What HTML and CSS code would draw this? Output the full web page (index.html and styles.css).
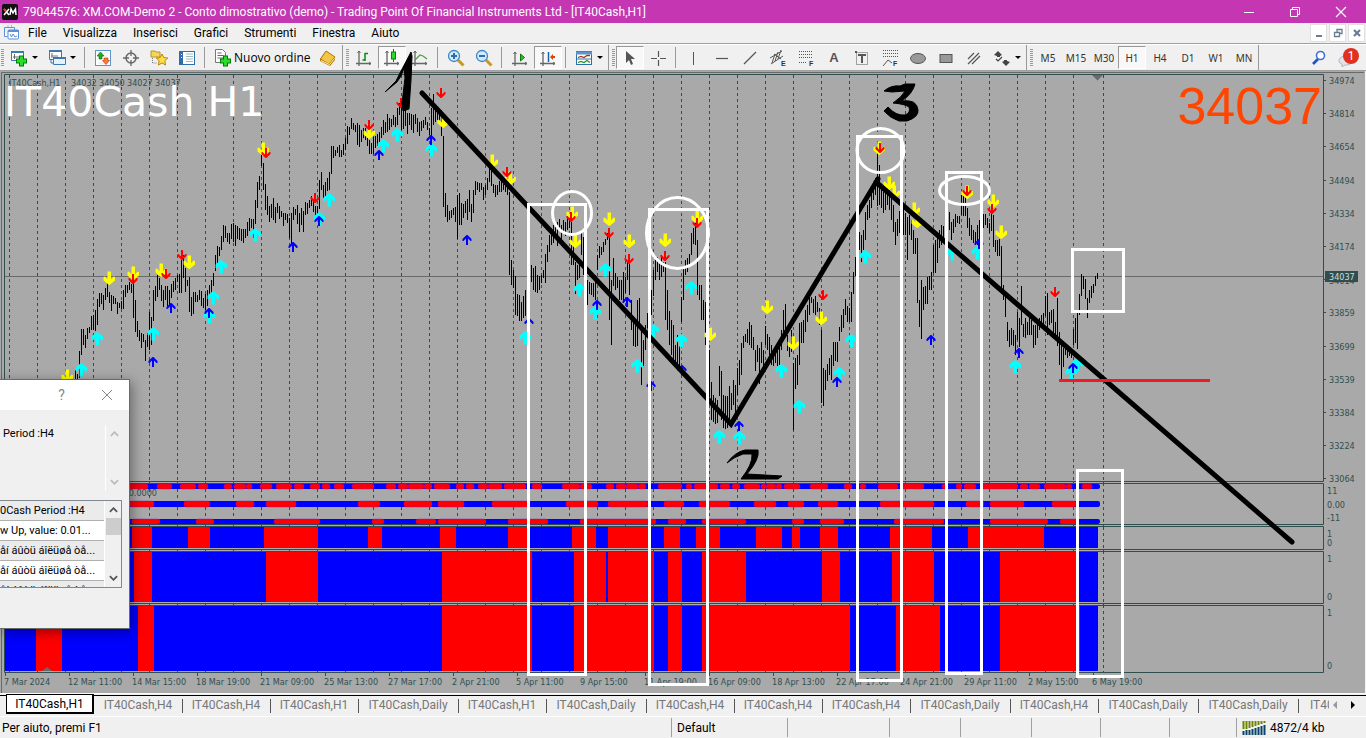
FILE: index.html
```html
<!DOCTYPE html>
<html lang="it">
<head>
<meta charset="utf-8">
<title>XM.COM-Demo 2 - IT40Cash,H1</title>
<link rel="stylesheet" href="styles.css">
</head>
<body>
<header class="titlebar">
  <svg class="logo" viewBox="0 0 16 16" aria-hidden="true"><rect width="16" height="16" rx="2" fill="#111"/><path d="M2 5l5 6M7 5l-5 6" stroke="#fff" stroke-width="1.6"/><path d="M2 5l2 2.500" stroke="#e22" stroke-width="1.600"/><path d="M8 11l1-6 2 4 2.500-4 .500 6" stroke="#fff" stroke-width="1.500" fill="none"/></svg>
  <h1 class="title">79044576: XM.COM-Demo 2 - Conto dimostrativo (demo) - Trading Point Of Financial Instruments Ltd - [IT40Cash,H1]</h1>
  <div class="winctl">
    <button aria-label="Riduci"><svg viewBox="0 0 12 12"><path d="M1 6.500h10" stroke="#fff"/></svg></button>
    <button aria-label="Ripristina"><svg viewBox="0 0 12 12"><path d="M1.500 3.500h7v7h-7zM3.500 3v-1.500h7v7H9" stroke="#fff" fill="none"/></svg></button>
    <button aria-label="Chiudi"><svg viewBox="0 0 12 12"><path d="M1 1l10 10M11 1L1 11" stroke="#fff" stroke-width="1.200"/></svg></button>
  </div>
</header>
<nav class="menubar">
  <svg class="menuicon" viewBox="0 0 16 16" aria-hidden="true"><path d="M.5 5V2.500h10V5M3.500 1h1M7 1h1" stroke="#5b8fd6" fill="none"/><path d="M.5 5v6.500h3" stroke="#5b8fd6" fill="#fff"/><rect x="4" y="5" width="10.500" height="9" rx="1" fill="#fff" stroke="#5b8fd6"/><path d="M4 6h11" stroke="#5b8fd6" stroke-width="2"/><path d="M6 9l1.500 3L9 9l2 3 2-1" stroke="#5b8fd6" fill="none"/></svg>
  <button>File</button><button>Visualizza</button><button>Inserisci</button><button>Grafici</button><button>Strumenti</button><button>Finestra</button><button>Aiuto</button>
  <div class="mdictl">
    <button aria-label="Riduci grafico"><svg viewBox="0 0 12 12"><path d="M3 9h6" stroke="#6b7c90" stroke-width="2"/></svg></button>
    <button aria-label="Ripristina grafico"><svg viewBox="0 0 12 12"><path d="M2.500 5.500h5v4h-5zM5 5V2.500h5v4H8M2 5.500h6M4.500 2.500h6" stroke="#6b7c90" stroke-width="1.300" fill="none"/></svg></button>
    <button aria-label="Chiudi grafico"><svg viewBox="0 0 12 12"><path d="M3 3l6 6M9 3L3 9" stroke="#6b7c90" stroke-width="2.200"/></svg></button>
  </div>
</nav>
<div class="toolbar">
  <div class="group first">
    <button class="drop" aria-label="Nuovo grafico"><svg viewBox="0 0 18 18"><path d="M1.500 2.500h12v9h-12z" fill="#fff" stroke="#3c78b4"/><path d="M1 3h13" stroke="#3c78b4" stroke-width="2"/><path d="M4.500 5v5M3 8h7" stroke="#666"/><path d="M11.500 6.500v11M6 12h11" stroke="#067a06" stroke-width="5"/><path d="M11.500 7.500v9M7 12h9" stroke="#2bdc2b" stroke-width="3"/></svg><i></i></button>
    <button class="drop" aria-label="Profili"><svg viewBox="0 0 18 18"><path d="M1.500 1.500h12v9h-12z" fill="#fff" stroke="#3c78b4"/><path d="M1 2h13" stroke="#3c78b4" stroke-width="2"/><path d="M4 4v5M3 7h7" stroke="#777"/><path d="M5.500 8.500h12v7h-12z" fill="#e4f0fb" stroke="#3c78b4"/><path d="M5 9h13" stroke="#3c78b4" stroke-width="2"/><path d="M3 11v3h2" stroke="#3c78b4" fill="none"/></svg><i></i></button>
    <span class="sep"></span>
    <button aria-label="Market Watch"><svg viewBox="0 0 18 18"><rect x="1.500" y="1.500" width="15" height="15" fill="#fff" stroke="#5a96cc"/><path d="M4 4h10M4 14h10M4 7h10" stroke="#dde8f4"/><path d="M6.500 3l3.500 4H8v3H5V7H3z" fill="#22aa22" stroke="#0a6a0a" stroke-width=".6"/><path d="M12 15.500l-3.500-4H10V9h4v2.500h1.500z" fill="#ff7a30" stroke="#c03000" stroke-width=".6"/></svg></button>
    <button aria-label="Finestra dati"><svg viewBox="0 0 18 18"><circle cx="9" cy="9" r="5" stroke="#666" stroke-width="1.500" fill="none"/><path d="M9 1v6M9 11v6M1 9h6M11 9h6" stroke="#666" stroke-width="1.300"/></svg></button>
    <button aria-label="Navigatore"><svg viewBox="0 0 18 18"><path d="M1 2h4l1 1h4v5H1z" fill="#f6d65a" stroke="#b8922a"/><path d="M2.500 9v5h4" stroke="#777" stroke-dasharray="1 1" fill="none"/><path d="M12 5l1.800 3.600 4 .4-3 2.800.8 4.200-3.600-2-3.600 2 .8-4.200-3-2.800 4-.4z" fill="#ffdf45" stroke="#b8860b"/></svg></button>
    <button aria-label="Terminale"><svg viewBox="0 0 18 18"><rect x="1.500" y="2.500" width="15" height="13" fill="#fff" stroke="#2f6ea8"/><path d="M2 3h3v12H2z" fill="#2f6ea8"/><path d="M8 5h7M8 7.500h7M8 10h7M8 12.500h7" stroke="#9bb"/><path d="M3.500 5v1m0 2v1" stroke="#fff"/></svg></button>
    <span class="sep"></span>
    <button class="order"><svg viewBox="0 0 18 18"><path d="M1.500.5h7l3 3v10h-10z" fill="#fff" stroke="#777"/><path d="M3.500 4h4M3.500 6.500h6M3.500 9h6" stroke="#666"/><path d="M11.500 6.500v11M6 12h11" stroke="#067a06" stroke-width="5"/><path d="M11.500 7.500v9M7 12h9" stroke="#2bdc2b" stroke-width="3"/></svg>Nuovo ordine</button>
    <button aria-label="MetaEditor"><svg viewBox="0 0 18 18"><path d="M1 10l6-8 9 6v3l-5 6-10-5z" fill="#b87a08"/><path d="M1.500 10L7 2l9 6-6 7z" fill="#f4c648" stroke="#b07a10"/><path d="M2 11.500l8.500 4 5-6" stroke="#fff2b0" fill="none"/></svg></button>
  </div>
  <div class="group">
    <button aria-label="Grafico a barre"><svg viewBox="0 0 18 18"><path d="M4 2v15M1 14.500h15" stroke="#666" stroke-width="1.300"/><path d="M2.500 4L4 2l1.500 2M14 13l2 1.500-2 1.500" stroke="#666" fill="none"/><path d="M10 4v8M10 4.500h3M7.500 11h3" stroke="#0a8a0a" stroke-width="1.500"/></svg></button>
    <button class="on" aria-label="Candele"><svg viewBox="0 0 18 18"><path d="M4 2v15M1 14.500h15" stroke="#666" stroke-width="1.300"/><path d="M2.500 4L4 2l1.500 2M14 13l2 1.500-2 1.500" stroke="#666" fill="none"/><path d="M10.500 0v13" stroke="#0a7a0a"/><rect x="8.500" y="3" width="4" height="7" fill="#2bdc2b" stroke="#0a7a0a"/></svg></button>
    <button aria-label="Grafico a linee"><svg viewBox="0 0 18 18"><path d="M4 2v15M1 14.500h15" stroke="#666" stroke-width="1.300"/><path d="M2.500 4L4 2l1.500 2M14 13l2 1.500-2 1.500" stroke="#666" fill="none"/><path d="M4 11l5-5 3 1 4 3" stroke="#4aa04a" stroke-width="1.300" fill="none"/></svg></button>
    <span class="sep"></span>
    <button aria-label="Ingrandisci"><svg viewBox="0 0 18 18"><path d="M11 11l5.500 5.500" stroke="#c89820" stroke-width="3"/><circle cx="7" cy="7" r="5.500" fill="#cfeaff" stroke="#3f84c4" stroke-width="1.300"/><path d="M7 4v6M4 7h6" stroke="#2a6cae" stroke-width="2"/></svg></button>
    <button aria-label="Riduci zoom"><svg viewBox="0 0 18 18"><path d="M11 11l5.500 5.500" stroke="#c89820" stroke-width="3"/><circle cx="7" cy="7" r="5.500" fill="#cfeaff" stroke="#3f84c4" stroke-width="1.300"/><path d="M4 7h6" stroke="#2a6cae" stroke-width="2"/></svg></button>
    <span class="sep"></span>
    <button aria-label="Scorrimento automatico"><svg viewBox="0 0 18 18"><path d="M4 3v14M1 14.500h15" stroke="#666" stroke-width="1.300"/><path d="M2.500 5L4 3l1.500 2M14 13l2 1.500-2 1.500" stroke="#666" fill="none"/><path d="M9.500 5l4 3.500-4 3.500z" fill="#2bc02b" stroke="#0a7a0a"/></svg></button>
    <button class="on" aria-label="Spostamento grafico"><svg viewBox="0 0 18 18"><path d="M4 3v14M1 14.500h15" stroke="#666" stroke-width="1.300"/><path d="M2.500 5L4 3l1.500 2M14 13l2 1.500-2 1.500" stroke="#666" fill="none"/><path d="M9.500 3v10" stroke="#1464b4" stroke-width="1.500"/><path d="M11 8l3-3v2h2v2h-2v2z" fill="#e04000"/></svg></button>
    <span class="sep"></span>
    <button class="drop" aria-label="Modelli"><svg viewBox="0 0 18 18"><rect x="1.500" y="2.500" width="15" height="13" fill="#fff" stroke="#2f6ea8"/><path d="M1 4h16" stroke="#5a96cc" stroke-width="3"/><path d="M3 8.500l3-1 3 1 3-2h3" stroke="#b03010" fill="none" stroke-width="1.300"/><path d="M2 10h14" stroke="#2f6ea8"/><path d="M3 13.500l3-1 3 1 3-2 3 2" stroke="#1a9a1a" fill="none" stroke-width="1.300"/></svg><i></i></button>
  </div>
  <div class="group">
    <button class="on" aria-label="Cursore"><svg viewBox="0 0 18 18"><path d="M5 2v12l3-3 2 5 2-1-2-5h4z" fill="#555"/></svg></button>
    <button aria-label="Mirino"><svg viewBox="0 0 18 18"><path d="M9.500 2v6M9.500 11v6M2 9.500h6M11 9.500h6" stroke="#555" stroke-width="1.200"/></svg></button>
    <span class="sep"></span>
    <button aria-label="Linea verticale"><svg viewBox="0 0 18 18"><path d="M8.500 3v13" stroke="#555"/></svg></button>
    <button aria-label="Linea orizzontale"><svg viewBox="0 0 18 18"><path d="M3 9.500h12" stroke="#555" stroke-width="1.200"/></svg></button>
    <button aria-label="Trendline"><svg viewBox="0 0 18 18"><path d="M3 15L15 3" stroke="#555" stroke-width="1.200"/></svg></button>
    <button aria-label="Canale"><svg viewBox="0 0 18 18"><path d="M1 9l12-7M2 15l12-8M3 14L6 5M6 12l3-9M9 10l3-9M5 5l7 5" stroke="#555"/><text x="12" y="17" class="tiny">E</text></svg></button>
    <button aria-label="Fibonacci"><svg viewBox="0 0 18 18"><path d="M2 2.500h14M2 5.500h14M2 8.500h14M2 13.500h8" stroke="#555" stroke-dasharray="1 1"/><text x="12" y="17" class="tiny">F</text></svg></button>
    <button class="ta">A</button>
    <button aria-label="Etichetta"><svg viewBox="0 0 18 18"><rect x="3.500" y="3.500" width="11" height="12" fill="none" stroke="#555" stroke-dasharray="1 1"/><path d="M5 6h8M9 6v8M2 3h2" stroke="#555" stroke-width="2"/></svg></button>
    <button aria-label="Ventaglio"><svg viewBox="0 0 18 18"><path d="M2 1.500h15M2 4.500h15M2 7.500h15" stroke="#555" stroke-dasharray="1 1"/><path d="M2 17l5-6 4 3" stroke="#555" fill="none"/><text x="12" y="17" class="tiny">F</text></svg></button>
    <button aria-label="Ellisse"><svg viewBox="0 0 18 18"><ellipse cx="9" cy="9.500" rx="7.500" ry="5" fill="#999" stroke="#555"/></svg></button>
    <button aria-label="Rettangolo"><svg viewBox="0 0 18 18"><rect x="3" y="5.500" width="12" height="8" fill="#999" stroke="#555"/></svg></button>
    <button aria-label="Linee cicliche"><svg viewBox="0 0 18 18"><path d="M3 10l6-6M3 15L14 4M7 15l8-8" stroke="#555" stroke-width="1.200"/></svg></button>
    <button class="drop" aria-label="Frecce"><svg viewBox="0 0 18 18"><path d="M5 2l4 4-2 1v1H4V7L1 6zM13 17l-4-4 2-1v-1h3v1l3 1z" fill="#444"/><path d="M3 10l2 2 4-4" stroke="#444" stroke-width="1.200" fill="none"/></svg><i></i></button>
  </div>
  <div class="group tf">
    <button>M5</button><button>M15</button><button>M30</button><button class="on">H1</button><button>H4</button><button>D1</button><button>W1</button><button>MN</button>
  </div>
  <div class="right">
    <button aria-label="Cerca"><svg viewBox="0 0 18 18"><path d="M3 15l5-5" stroke="#1e50c8" stroke-width="2.600"/><circle cx="10.500" cy="6.500" r="4" fill="#fff" stroke="#3f70d8" stroke-width="1.600"/></svg></button>
    <button class="bell" aria-label="Notifiche"><svg viewBox="0 0 18 18"><path d="M1 12c0-3 3-5 7-5s6 2 6 5-3 4-7 4l-3 2v-3c-2-.6-3-1.500-3-3z" fill="#e3e3ea" stroke="#b4b4bc"/></svg><b>1</b></button>
  </div>
</div>

<main class="workspace">
  <svg class="chart" id="chart" viewBox="0 71 1366 622" preserveAspectRatio="xMinYMin meet">
    <path class="edge" d="M1.500 693V72.500H1364"/>
    <path d="M1365.500 71v622" stroke="#f4f4f4"/>
    <g id="grid"></g>
    <path class="frame" d="M4.500 672.500V74.500H1323.500V481.500H4.500M4.500 483.500H1323.500V524.500H4.500M4.500 526.500H1323.500V549.500H4.500M4.500 551.500H1323.500V603.500H4.500M4.500 605.500H1323.500V672.500H4.500"/>
    <path d="M5 276.500H1323" stroke="#696969"/>
    <path d="M1092 75h11l-5.500 5.500z" fill="#696969"/>
    <g id="panels"></g>
    <path d="M42 671h10l-5-4z" fill="#696969"/>
    <g id="axis"></g>
    <text class="small" y="86"><tspan x="9">IT40Cash,H1</tspan><tspan x="71">34032</tspan><tspan x="99">34050</tspan><tspan x="127">34027</tspan><tspan x="155">34037</tspan></text>
    <text class="small" x="157" y="496" text-anchor="end">0.0000</text>
    <rect x="1325" y="271" width="33" height="11" fill="#2f4f4f"/>
    <text class="small tag" x="1329" y="280">34037</text>
    <path id="bars" stroke="#000" fill="none"/>
    <g id="arrows"></g>
    <text class="symbol" x="4" y="116">IT40Cash H1</text>
    <text class="quote" x="1322" y="124" text-anchor="end">34037</text>
    <path d="M422 93L731 424L878 179M876 182L1292 542" stroke="#000" stroke-width="5" stroke-linecap="round" fill="none"/>
    <path d="M1059 380.500h151" stroke="#ed1c24" stroke-width="3"/>
    <g fill="none" stroke="#fff" stroke-width="3">
      <rect x="528.500" y="204.500" width="57" height="470"/><rect x="649.500" y="209.500" width="58" height="475"/>
      <rect x="857.500" y="136.500" width="44" height="544"/><rect x="946.500" y="172.500" width="35" height="501"/>
      <rect x="1072.500" y="249.500" width="51" height="62"/><rect x="1077.500" y="470.500" width="45" height="206"/>
      <ellipse cx="572" cy="213" rx="19.500" ry="21.500"/><ellipse cx="677.500" cy="233" rx="31" ry="35.500"/>
      <ellipse cx="880.500" cy="150.500" rx="23.500" ry="22"/><ellipse cx="964.500" cy="190.500" rx="25" ry="14"/>
    </g>
    <path d="M385 92L396 81L400 73L411 52L412 56L411 80L409 109L403 111L402 103L405 78L404 68L401 76L397 82Z" stroke="#000"/>
    <g stroke="#000" stroke-linejoin="round">
      <path d="M727 463Q735 452 745 450H758Q760 459 747 474L782 476L778 479H741Q753 464 752 454H743Q734 457 727 463Z"/>
      <path d="M884 91Q891 85 900 86L905 84H915Q913 93 902 101Q917 99 918 110Q919 117 907 121H899Q890 118 884 111L888 107Q896 116 905 115Q911 113 909 107Q905 104 893 103Q902 97 905 91L892 92Z"/>
    </g>
  </svg>
  <section class="dialog" aria-label="Avviso">
    <div class="dlghead"><button aria-label="Guida">?</button><button aria-label="Chiudi avviso"><svg viewBox="0 0 12 12"><path d="M1 1l10 10M11 1L1 11" stroke="#888"/></svg></button></div>
    <div class="message"><p>Period :H4</p><div class="scroll"><svg viewBox="0 0 10 6"><path d="M1 5l4-4 4 4"/></svg><svg viewBox="0 0 10 6"><path d="M1 1l4 4 4-4"/></svg></div></div>
    <div class="list">
      <ul><li>0Cash Period :H4</li><li>w Up, value: 0.01...</li><li>åí áûòü áîëüøå òå...</li><li>åí áûòü áîëüøå òå...</li><li>åí áûòü áîëüøå òå...</li></ul>
      <div class="scroll dark"><svg viewBox="0 0 10 6"><path d="M1 5l4-4 4 4"/></svg><span></span><svg viewBox="0 0 10 6"><path d="M1 1l4 4 4-4"/></svg></div>
    </div>
  </section>
</main>

<nav class="tabs">
  <button class="cur">IT40Cash,H1</button><button>IT40Cash,H4</button><button>IT40Cash,H4</button><button>IT40Cash,H1</button><button class="long">IT40Cash,Daily</button><button>IT40Cash,H1</button><button class="long">IT40Cash,Daily</button><button>IT40Cash,H4</button><button>IT40Cash,H4</button><button>IT40Cash,H4</button><button class="long">IT40Cash,Daily</button><button>IT40Cash,H4</button><button class="long">IT40Cash,Daily</button><button class="long">IT40Cash,Daily</button><button class="last">IT40Cash,H4</button>
  <div class="tabnav"><button class="off" aria-label="Schede precedenti"></button><button aria-label="Schede successive"></button></div>
</nav>
<footer class="status">
  <span class="help">Per aiuto, premi F1</span><span class="w116">Default</span><span class="w102"></span><span class="w71"></span><span class="w71"></span><span class="w69"></span><span class="w69"></span><span class="w67"></span>
  <span class="net"><svg viewBox="0 0 24 14"><path d="M1.500 0v8M4.500 0v8M7.500 0v7M10.500 0v6M13.500 0v5M16.500 0v4M19.500 0v3M22.500 0v2" stroke="#6f8700" stroke-width="2"/><path d="M1.500 14v-4M4.500 14v-5M7.500 14v-5M10.500 14v-6M13.500 14v-7M16.500 14v-8M19.500 14v-9M22.500 14v-10" stroke="#0a4468" stroke-width="2"/></svg>4872/4 kb</span>
</footer>
<script src="chart.js"></script>
</body>
</html>
```
FILE: styles.css
```css
* { box-sizing: border-box; }
body { margin: 0; height: 100vh; display: flex; flex-direction: column; overflow: hidden; background: #f0f0f0; color: #000; font: 12px Roboto, "Open Sans", sans-serif; }
button { border: 0; margin: 0; padding: 0; background: none; font: inherit; color: inherit; white-space: nowrap; }
button svg { display: block; }

.titlebar { height: 23px; flex: none; display: flex; align-items: center; background: #c436b2; color: #fff; padding-left: 2px; }
.logo { width: 16px; height: 16px; }
.title { margin: 0 0 0 5px; flex: 1; font-size: 12px; font-weight: 400; white-space: nowrap; overflow: hidden; }
.winctl { display: flex; height: 20px; margin-right: 2px; }
.winctl button { width: 46px; display: flex; align-items: center; justify-content: center; }
.winctl svg { width: 12px; height: 12px; }

.menubar { height: 21px; flex: none; display: flex; align-items: stretch; border-bottom: 1px solid #a0a0a0; padding-left: 4px; }
.menuicon { width: 16px; height: 16px; margin: 2px 0 0; }
.menubar > button { padding: 0 8px; line-height: 19px; }
.mdictl { margin-left: auto; display: flex; gap: 2px; padding: 1px 1px 1px 0; }
.mdictl button { width: 17px; background: #fff; border: 1px solid #e0e0e0; display: flex; align-items: center; justify-content: center; }
.mdictl svg { width: 12px; height: 12px; }

.toolbar { height: 27px; flex: none; display: flex; border-top: 1px solid #fff; border-bottom: 1px solid #a0a0a0; color: #333; }
.group { display: flex; align-items: center; border-right: 1px solid #999; position: relative; padding-left: 7px; height: 25px; }
.group.first { padding-left: 5px; }
.group::before { content: ""; position: absolute; left: 3px; top: 4px; width: 3px; height: 18px; background: repeating-linear-gradient(#999 0 1px, transparent 1px 2px); }
.group.first::before { left: 1px; }
.group button { width: 28px; height: 23px; display: flex; align-items: center; justify-content: center; flex: none; border: 1px solid transparent; }
.group button svg { width: 18px; height: 18px; flex: none; }
.group .drop { width: 38px; justify-content: flex-start; padding-left: 4px; gap: 4px; }
.drop i { border: 3px solid transparent; border-top-color: #000; border-bottom: 0; }
.group .on { background: #f8f8f8; border-color: #999 #fff #fff #999; }
.sep { width: 8px; height: 21px; flex: none; background: linear-gradient(#999, #999) 3px 0 / 1px 100% no-repeat; }
.group .order { width: 105px; font: 12px "Open Sans", "Noto Sans", sans-serif; color: #000; gap: 2px; justify-content: flex-start; padding-left: 4px; }
.group.tf { font: 10px "Noto Sans", sans-serif; color: #333; }
.group .ta { font: bold 13px "Liberation Sans", sans-serif; color: #555; }
.tiny { font: bold 7px "Liberation Sans", sans-serif; fill: #333; }
.right { margin-left: auto; display: flex; align-items: center; gap: 10px; padding-right: 10px; }
.right svg { width: 18px; height: 18px; }
.bell { position: relative; }
.bell b { position: absolute; left: 5px; top: -1px; width: 16px; height: 16px; border-radius: 8px; background: #e03020; color: #fff; font: 12px/16px Roboto, sans-serif; text-align: center; }

.workspace { flex: 1; min-height: 0; position: relative; background: #a9a9a9; }
.chart { display: block; width: 100%; height: 100%; overflow: visible; }
.edge { stroke: #696969; fill: none; }
.frame { stroke: #2f4f4f; fill: none; }
.grid { stroke: #2f4f4f; stroke-dasharray: 3 3; }
.small { font: 9px "DejaVu Sans Condensed", "DejaVu Sans", sans-serif; fill: #2f4f4f; }
.tag { fill: #d8d8d8; }
.symbol { font: 41px "DejaVu Sans", sans-serif; fill: #fff; }
.quote { font: 52px "Liberation Sans", Arial, sans-serif; fill: #ff4500; }

.dialog { position: absolute; left: 0; top: 308px; width: 130px; height: 250px; background: #f0f0f0; border: 1px solid #6a6a6a; border-left: 0; box-shadow: 2px 3px 12px rgba(0, 0, 0, .4); font: 11px Roboto, sans-serif; overflow: hidden; }
.dlghead { height: 30px; background: #fff; display: flex; justify-content: flex-end; color: #888; font-size: 14px; }
.dlghead button { width: 45px; display: flex; align-items: center; justify-content: center; }
.dlghead svg { width: 12px; height: 12px; }
.message { height: 66px; margin: 15px 7px 9px 0; display: flex; justify-content: space-between; }
.message p { margin: 0 0 0 3px; line-height: 17px; }
.scroll { width: 17px; border-left: 1px solid #fff; display: flex; flex-direction: column; align-items: center; justify-content: space-between; padding: 6px 0; }
.scroll svg { width: 9px; height: 6px; fill: none; stroke: #bbb; stroke-width: 2; }
.list { height: 88px; width: 122px; border: 1px solid #828790; border-left: 0; display: flex; overflow: hidden; }
.list ul { list-style: none; margin: 0; padding: 0; flex: 1; min-width: 0; overflow: hidden; }
.list li { height: 20px; line-height: 20px; white-space: nowrap; border-bottom: 1px solid #b0b0b0; background: #fff; overflow: hidden; }
.list li:nth-child(odd) { background: #ebebeb; }
.scroll.dark { justify-content: flex-start; }
.scroll.dark svg { stroke: #555; flex: none; }
.scroll.dark span { width: 15px; height: 17px; background: #cdcdcd; margin: 5px 0 auto; }

.tabs { height: 23px; flex: none; display: flex; align-items: stretch; padding: 0 0 1px 6px; border-top: 1px solid #f8f8f8; position: relative; color: #777; overflow: hidden; }
.tabs::before { content: ""; position: absolute; left: 0; right: 0; top: 1px; height: 1px; background: #000; }
.tabs > button { width: 88px; flex: none; position: relative; line-height: 19px; padding-top: 1px; }
.tabs > .long { width: 100px; }
.tabs > button::after { content: ""; position: absolute; right: -1px; top: 5px; width: 1px; height: 14px; background: #555; }
.tabs > .cur { background: #fff; color: #000; border: solid #000; border-width: 1px 2px 2px 1px; height: 20px; line-height: 17px; }
.tabs > .cur::after { display: none; }
.tabs > .last { width: 31px; overflow: hidden; text-align: left; padding-left: 12px; }
.tabnav { display: flex; align-items: center; gap: 14px; padding-left: 4px; }
.tabnav button { border: 4px solid transparent; border-left-color: #000; border-right: 0; }
.tabnav .off { border: 4px solid transparent; border-right-color: #999; border-left: 0; }

.status { height: 22px; flex: none; display: flex; align-items: center; border-top: 1px solid #fff; white-space: nowrap; }
.status span { height: 19px; line-height: 20px; border-left: 1px solid #a0a0a0; padding-left: 5px; }
.status .help { flex: 1; border: 0; padding-left: 2px; }
.w116 { width: 116px; } .w102 { width: 102px; } .w71 { width: 71px; } .w69 { width: 69px; } .w67 { width: 67px; }
.net { display: flex; align-items: center; gap: 4px; width: 130px; }
.net svg { width: 24px; height: 14px; }
```
FILE: chart.js
```js
const NS = 'http://www.w3.org/2000/svg';
function add(parent, tag, attrs, text) {
  const el = document.createElementNS(NS, tag);
  for (const k in attrs) el.setAttribute(k, attrs[k]);
  if (text) el.textContent = text;
  document.getElementById(parent).appendChild(el);
}

// vertical grid
const lines = [];
for (let x = 9; x < 1080; x += 28) lines.push(x);
lines.push(1103);
for (const x of lines) {
  add('grid', 'path', { class: 'grid', d: `M${x}.5 75V524M${x}.5 527V672` });
  add('grid', 'path', { d: `M${x}.5 481v3M${x}.5 524v3M${x}.5 549v3M${x}.5 603v3`, stroke: '#2f4f4f' });
}

// price, panel and time scales
[34974, 34814, 34654, 34494, 34334, 34174, 34014, 33859, 33699, 33539, 33384, 33224, 33064].forEach((p, i) => {
  const y = 80 + Math.round(i * 33.2);
  add('axis', 'path', { d: `M1324 ${y}.5h2`, stroke: '#2f4f4f' });
  add('axis', 'text', { class: 'small', x: 1329, y: y + (i === 6 ? 5 : 4) }, String(p));
});
[['11', 494], ['0.00', 508], ['-11', 521], ['1', 537], ['0', 546], ['1', 562], ['0', 600], ['1', 616], ['0', 669]].forEach(([t, y]) =>
  add('axis', 'text', { class: 'small', x: 1327, y }, t));
['7 Mar 2024', '12 Mar 11:00', '14 Mar 15:00', '18 Mar 19:00', '21 Mar 09:00', '25 Mar 13:00', '27 Mar 17:00', '2 Apr 21:00', '5 Apr 11:00', '9 Apr 15:00', '11 Apr 19:00', '16 Apr 09:00', '18 Apr 13:00', '22 Apr 17:00', '24 Apr 21:00', '29 Apr 11:00', '2 May 15:00', '6 May 19:00'].forEach((t, i) => {
  add('axis', 'path', { d: `M${5 + 64 * i}.5 673v3`, stroke: '#2f4f4f' });
  add('axis', 'text', { class: 'small', x: 4 + 64 * i, y: 685 }, t);
});

// histogram panels: pairs are red spans over blue
function panel(y, h, spans) {
  add('panels', 'rect', { x: 5, y, width: 1093, height: h, fill: '#00f' });
  for (let i = 0; i < spans.length; i += 2)
    add('panels', 'rect', { x: spans[i], y, width: spans[i + 1] - spans[i], height: h, fill: '#f00' });
}
panel(527, 21, [132,152,188,210,264,318,368,382,440,456,508,530,572,596,608,651,664,680,696,720,756,782,792,800,820,838,890,932,968,1044]);
panel(552, 50, [134,152,266,318,442,532,574,606,608,654,668,682,702,746,822,840,892,934,1000,1078]);
panel(606, 65, [36,62,138,154,442,532,574,654,668,682,702,850,896,940,1000,1080]);

function band(y, h, spans) {
  add('panels', 'rect', { x: 5, y, width: 1095, height: h, rx: 2, fill: '#00f' });
  for (let i = 0; i < spans.length; i += 2)
    add('panels', 'rect', { x: spans[i], y, width: spans[i + 1] - spans[i], height: h, rx: 2, fill: '#f00', stroke: '#a000c0', 'stroke-width': .4 });
}
band(484, 5, [120,148,157,172,180,196,198,208,224,232,234,246,246,252,260,272,276,292,294,304,310,320,322,330,334,344,352,374,386,396,398,408,408,424,424,432,434,450,456,464,466,474,478,488,488,502,504,526,532,542,562,580,580,592,606,614,616,626,626,638,638,646,658,682,686,692,694,718,720,730,732,740,744,760,761,766,766,776,776,782,784,800,810,828,844,852,860,866,878,898,900,924,942,948,956,962,964,976,982,1018,1020,1028,1029,1040,1044,1066,1066,1072,1082,1092]);
band(501, 6, [130,154,184,210,236,254,266,296,358,380,404,432,438,464,492,530,566,598,608,648,664,684,699,730,754,776,788,804,818,838,880,934,966,984,990,1024,1052,1076]);
band(519, 5, [132,160,196,214,274,320,372,384,416,436,438,486,508,548,580,656,668,686,702,746,792,804,820,844,894,944,990,1048,1060,1077]);

// bars: x, high and low in chart units
const raw = `75 370 380,77 374 380,79 351 378,81 329 355,83 329 345,85 335 348,87 328 339,89 327 333,91 316 330,93 315 330,95 310 331,97 299 325,99 293 307,101 293 304,103 295 310,105 288 300,107 283 297,109 292 303,111 295 311,113 296 304,115 298 304,117 302 314,119 303 308,121 301 309,123 290 309,125 285 297,127 285 293,129 282 290,131 284 293,133 282 318,135 300 332,137 321 337,139 330 341,141 333 348,143 334 342,145 340 361,147 333 347,149 312 350,151 317 345,153 290 321,155 286 301,157 275 297,159 278 290,161 285 301,163 290 307,165 286 300,167 286 306,169 290 306,171 284 298,173 281 292,175 278 290,177 275 282,179 274 293,181 260 293,183 255 278,185 268 292,187 280 286,189 277 312,191 297 316,193 292 314,195 292 302,197 295 302,199 290 300,201 291 306,203 298 308,205 294 310,207 290 306,209 285 297,211 280 293,213 273 286,215 255 271,217 246 263,219 247 256,221 236 250,223 225 242,225 226 238,227 233 242,229 233 244,231 224 239,233 223 242,235 225 246,237 226 239,239 228 240,241 229 241,243 229 243,245 229 238,247 222 236,249 218 231,251 219 228,253 219 238,255 200 224,257 182 208,259 176 190,261 155 166,263 163 190,265 184 210,267 196 215,269 206 222,271 204 218,273 198 220,275 207 223,277 203 213,279 206 219,281 211 217,283 213 226,285 213 220,287 214 223,289 218 238,291 213 245,293 207 220,295 209 215,297 205 224,299 213 232,301 208 225,303 211 232,305 202 215,307 203 214,309 200 208,311 196 206,313 200 212,315 206 216,317 206 214,319 180 209,321 172 190,323 185 198,325 182 200,327 178 191,329 172 190,331 146 174,333 146 158,335 150 156,337 147 153,339 145 157,341 150 157,343 144 155,345 138 150,347 126 144,349 127 135,351 118 129,353 123 130,355 125 132,357 123 145,359 125 147,361 130 142,363 128 138,365 128 140,367 138 146,369 140 154,371 143 154,373 137 154,375 136 148,377 134 146,379 132 145,381 127 138,383 120 135,385 122 133,387 114 132,389 118 130,391 119 127,393 115 125,395 117 127,397 108 125,399 103 115,401 100 130,403 104 129,405 108 126,407 113 134,409 113 125,411 114 130,413 115 133,415 114 124,417 118 132,419 122 136,421 121 131,423 120 128,425 117 125,427 122 130,429 128 135,431 108 139,433 94 125,435 110 122,437 107 120,439 112 124,441 110 136,443 136 207,445 193 217,447 205 222,449 211 220,451 210 218,453 208 215,455 207 222,457 195 239,459 193 225,461 203 225,463 204 218,465 201 213,467 199 220,469 190 212,471 204 222,473 190 213,475 181 195,477 182 190,479 183 192,481 183 190,483 187 200,485 185 195,487 178 190,489 166 182,491 170 186,493 184 193,495 185 197,497 185 195,499 181 192,501 178 192,503 184 190,505 185 192,507 178 195,509 192 275,511 260 285,513 270 288,515 276 315,517 294 316,519 295 321,521 302 321,523 296 318,525 290 316,527 295 316,529 270 290,531 265 282,533 268 290,535 266 292,537 275 293,539 276 290,541 275 283,543 270 278,545 254 283,547 245 262,549 235 252,551 228 245,553 225 243,555 224 238,557 222 246,559 219 230,561 225 240,563 220 232,565 222 236,567 215 230,569 217 228,571 222 265,573 245 265,575 262 294,577 265 280,579 262 278,581 230 255,583 237 275,585 268 290,587 280 305,589 282 294,591 283 295,593 283 297,595 275 300,597 255 270,599 246 258,601 247 255,603 242 252,605 239 245,607 233 240,609 236 320,611 280 345,613 258 286,615 273 290,617 277 288,619 280 300,621 280 300,623 272 303,625 277 293,627 262 280,629 264 295,631 300 330,633 318 346,635 325 347,637 300 346,639 298 325,641 325 385,643 340 366,645 325 350,647 313 335,649 305 325,651 290 315,653 270 296,655 258 280,657 257 272,659 262 280,661 255 277,663 262 272,665 262 320,667 290 330,669 311 345,671 320 355,673 325 360,675 345 362,677 335 364,679 346 367,681 297 322,683 268 300,685 260 275,687 258 272,689 254 266,691 233 255,693 228 244,695 220 245,697 240 295,699 285 300,701 285 320,703 300 320,705 302 345,707 306 355,709 350 397,711 382 420,713 395 422,715 398 424,717 400 423,719 366 396,721 371 420,723 395 428,725 396 429,727 396 428,729 386 422,731 393 410,733 380 405,735 385 415,737 368 395,739 360 385,741 343 375,743 336 348,745 334 342,747 329 343,749 322 345,751 325 348,753 337 350,755 350 371,757 345 362,759 348 384,761 342 363,763 350 372,765 326 345,767 334 350,769 337 355,771 345 365,773 350 366,775 347 363,777 345 366,779 346 365,781 330 350,783 310 335,785 304 332,787 335 351,789 342 357,791 330 352,793 363 430,795 358 389,797 355 385,799 323 365,801 322 343,803 320 343,805 310 332,807 305 322,809 295 315,811 297 303,813 299 313,815 296 315,817 302 312,819 308 325,821 330 403,823 368 406,825 370 390,827 364 381,829 358 375,831 355 380,833 342 366,835 342 361,837 342 362,839 327 341,841 315 332,843 309 328,845 299 315,847 306 322,849 308 322,851 292 322,853 272 294,855 257 276,857 240 270,859 232 250,861 235 262,863 230 250,865 212 240,867 205 220,869 200 218,871 192 208,873 187 200,875 178 195,877 150 206,879 165 205,881 188 208,883 192 213,885 193 210,887 188 205,889 190 210,891 196 220,893 205 232,895 222 245,897 219 236,899 211 233,901 205 225,903 207 235,905 213 235,907 217 260,909 215 235,911 220 240,913 230 254,915 238 254,917 238 303,919 300 327,921 280 339,923 287 310,925 286 304,927 277 304,929 276 290,931 272 290,933 245 273,935 240 273,937 235 263,939 230 248,941 225 245,943 226 240,945 222 240,947 215 230,949 212 230,951 222 240,953 219 233,955 214 227,957 216 223,959 216 224,961 195 215,963 193 216,965 196 216,967 208 228,969 218 236,971 225 240,973 230 243,975 232 245,977 225 245,979 220 243,981 213 236,983 214 228,985 214 225,987 218 228,989 223 233,991 213 231,993 215 247,995 240 252,997 240 256,999 239 256,1001 246 290,1003 285 300,1005 294 317,1007 322 341,1009 330 347,1011 328 345,1013 330 346,1015 335 355,1017 312 340,1019 318 347,1021 286 325,1023 324 337,1025 318 338,1027 322 335,1029 315 335,1031 320 335,1033 325 348,1035 325 345,1037 325 338,1039 318 330,1041 315 325,1043 313 325,1045 296 316,1047 293 335,1049 312 325,1051 310 323,1053 309 333,1055 322 335,1057 298 346,1059 332 365,1061 344 380,1063 348 367,1065 345 355,1067 347 358,1069 350 356,1071 350 358,1073 329 345,1075 318 343,1077 313 349,1079 294 315,1081 274 296,1083 276 289,1085 279 299,1087 298 318,1089 290 303,1091 286 298,1093 284 293,1095 276 286,1097 273 279`;
document.getElementById('bars').setAttribute('d', raw.split(',').map(s => {
  const [x, hi, lo] = s.split(' ');
  return `M${x}.5 ${hi}V${lo}`;
}).join(''));

// signal arrows, by centre point; drawn pointing down, flipped for up
const BIG = 'M-1.5-6.500H2V1.500L4.500-1.500L6-1V2.500L.5 7H0L-5.500 2.500V-1L-4-1.500L-1.500 1.500Z';
const SMALL = 'M-1-5H1V1.500L3.500-1H4.500V1L.5 5H-.5L-4.500 1V-1H-3.500L-1 1.500Z';
function arrows(points, color, shape, dir) {
  for (let i = 0; i < points.length; i += 2)
    add('arrows', 'path', { d: shape, fill: color, transform: `translate(${points[i]} ${points[i + 1]}) scale(1 ${dir})` });
}
arrows([109,278,133,273,161,270,189,262,263,149,67,376,369,132,443,121,492,161,510,178,572,213,575,241,609,219,629,241,665,240,697,217,710,334,767,307,793,343,821,318,879,148,889,183,894,192,914,209,917,221,967,192,993,201,1001,232], '#ff0', BIG, 1);
arrows([81,370,97,339,153,334,213,298,209,317,221,267,255,235,319,219,329,200,383,146,397,135,431,150,525,338,579,290,605,270,595,313,653,331,637,366,681,341,691,288,719,437,739,438,781,371,799,407,839,374,851,341,865,257,952,254,977,253,1015,367,1071,373,1077,365], '#0ff', BIG, -1);
arrows([133,279,166,274,182,255,266,153,315,198,369,125,401,103,441,93,507,172,571,217,609,233,629,259,665,256,697,223,823,295,880,148,967,191,992,209,1055,292], '#f00', SMALL, 1);
arrows([171,308,153,362,209,313,293,247,319,221,379,155,431,140,467,240,529,323,597,305,627,302,651,386,682,370,739,426,837,382,931,340,979,244,1019,353,1073,368], '#00f', SMALL, -1);
```
